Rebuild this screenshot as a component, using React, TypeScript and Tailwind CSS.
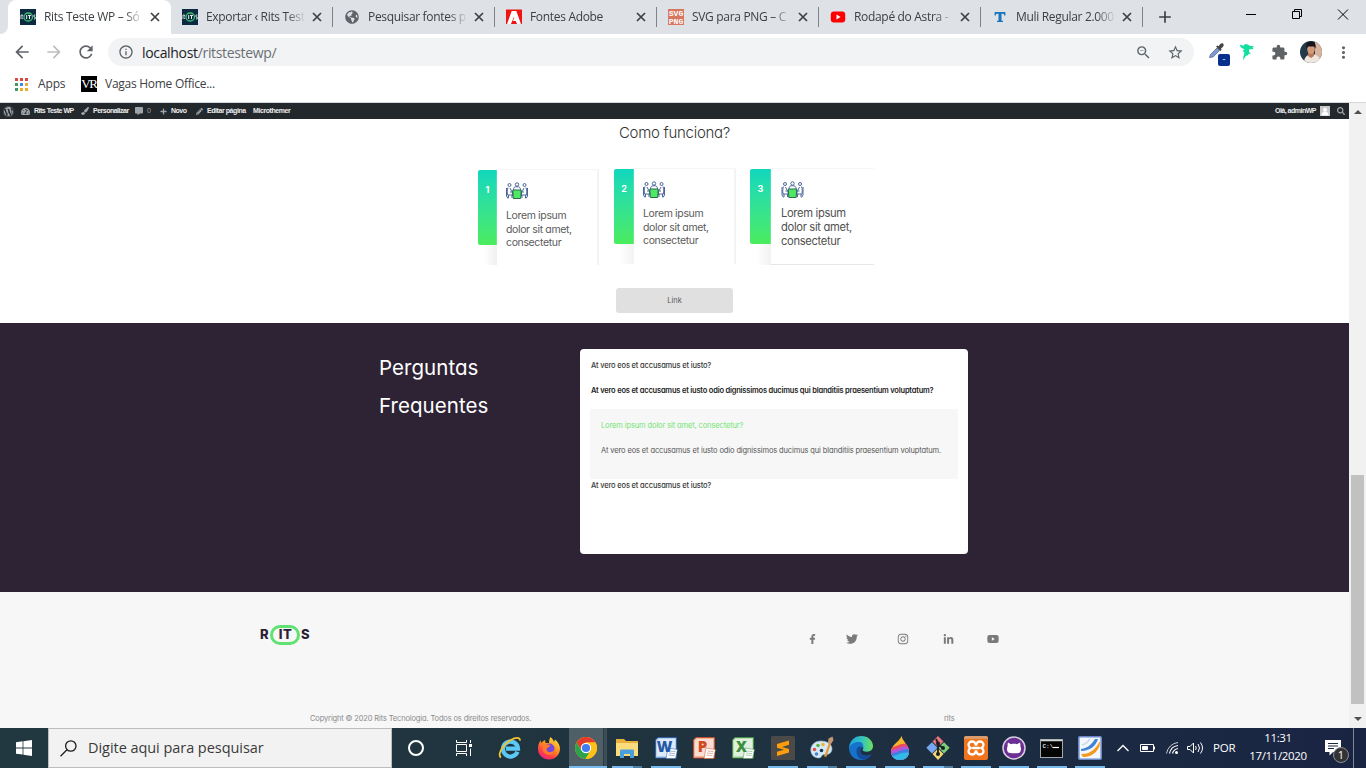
import type { ReactNode } from "react";
import {
  MdArrowBack,
  MdArrowForward,
  MdRefresh,
  MdInfoOutline,
  MdZoomOut,
  MdStarBorder,
  MdExtension,
  MdMoreVert,
  MdAdd,
} from "react-icons/md";
import {
  FaWordpress,
  FaTachometerAlt,
  FaPaintBrush,
  FaCommentAlt,
  FaPencilAlt,
  FaFacebookF,
  FaTwitter,
  FaInstagram,
  FaLinkedinIn,
  FaYoutube,
  FaSearch,
  FaPlus,
  FaGlobeAmericas,
} from "react-icons/fa";

/* ---------- Browser chrome ---------- */

function RitsFavicon() {
  return (
    <svg width="16" height="16" viewBox="0 0 16 16">
      <rect width="16" height="16" fill="#0d2b40" />
      <rect x="4" y="4" width="8.5" height="8" rx="4" fill="none" stroke="#3fbf6f" strokeWidth="1.3" />
      <path d="M1 6v4M2.6 6v1.6M1 6h1.6M2.6 8.6V10M14 6h1.4M14 6v2h1.2v2H14" stroke="#c9d6de" fill="none" />
      <path d="M6.7 6v4M8 6.4h3M9.5 6.4V10" stroke="#e8f4ee" fill="none" />
    </svg>
  );
}

function AdobeFavicon() {
  return (
    <svg width="16" height="16" viewBox="0 0 16 16">
      <rect y="0.5" width="16" height="14.5" fill="#f01414" />
      <path d="M5.7 2h4.6L15 15h-4l-1.3-3H6.9l1.4-3L8 8 4.9 15H1z" fill="#fff" />
    </svg>
  );
}

function SvgPngFavicon() {
  return (
    <svg width="16" height="16" viewBox="0 0 16 16">
      <rect width="16" height="16" fill="#d8765f" />
      <g fill="#fff" fontFamily="Liberation Mono, monospace" fontWeight="700" fontSize="8">
        <text x="0.8" y="7.2" textLength="14.4">SVG</text>
        <text x="0.8" y="14.7" textLength="14.4">PNG</text>
      </g>
    </svg>
  );
}

function YoutubeFavicon() {
  return (
    <svg width="16" height="16" viewBox="0 0 16 16">
      <rect x="0.8" y="2.4" width="14.4" height="11.2" rx="3" fill="#f00" />
      <path d="M6.5 5.6v4.8L10.6 8z" fill="#fff" />
    </svg>
  );
}

function TFavicon() {
  return (
    <svg width="16" height="16" viewBox="0 0 16 16">
      <path d="M2.6 3h10.8v3.6h-1.1l-.7-1.9H9.5v6.8l1.5.5v1H5v-1l1.5-.5V4.7H4.4l-.7 1.900H2.600z" fill="#1b75bb" />
    </svg>
  );
}

type TabProps = { icon: ReactNode; title: string; active?: boolean; divider?: boolean };

function Tab({ icon, title, active, divider }: TabProps) {
  return (
    <div
      className={
        active
          ? "relative -mr-px flex h-[34px] w-[163px] items-center rounded-t-lg bg-white pl-3"
          : "relative flex h-[34px] w-[162px] items-center pl-3"
      }
    >
      {divider && <span className="absolute left-0 top-[7px] h-5 w-px bg-[#808387]" />}
      <span className="flex size-4 shrink-0 items-center justify-center">{icon}</span>
      <span className="ml-2 w-[98px] shrink-0 whitespace-nowrap text-[12px] tracking-[-0.32px] text-[#3c4043] [mask-image:linear-gradient(to_right,#000_82%,transparent_102%)]">
        {title}
      </span>
      <svg className="ml-[8px] shrink-0" width="10" height="10" viewBox="0 0 10 10" stroke="#3c4043" strokeWidth="1.700">
        <path d="M1 1l8 8M9 1L1 9" />
      </svg>
    </div>
  );
}

const tabs: TabProps[] = [
  { icon: <RitsFavicon />, title: "Rits Teste WP – Só", active: true },
  { icon: <RitsFavicon />, title: "Exportar ‹ Rits Test" },
  { icon: <FaGlobeAmericas className="size-[14px] text-[#5f6368]" />, title: "Pesquisar fontes p", divider: true },
  { icon: <AdobeFavicon />, title: "Fontes Adobe", divider: true },
  { icon: <SvgPngFavicon />, title: "SVG para PNG – C", divider: true },
  { icon: <YoutubeFavicon />, title: "Rodapé do Astra -", divider: true },
  { icon: <TFavicon />, title: "Muli Regular 2.000", divider: true },
];

function TabStrip() {
  return (
    <div className="flex h-[34px] bg-[#dee1e6]">
      <span className="w-2 bg-white">
        <span className="block h-[34px] rounded-br-lg bg-[#dee1e6]" />
      </span>
      {tabs.map((tab) => (
        <Tab key={tab.title} {...tab} />
      ))}
      <span className="mt-[7px] h-5 w-px bg-[#808387]" />
      <MdAdd className="ml-3 mt-[7px] size-5 text-[#3c4043]" />
      <svg className="ml-auto mr-[14px] mt-2" width="106" height="13" viewBox="0 0 106 13" fill="none" stroke="#000">
        <path d="M0 6.500h10" />
        <path d="M46.500 3.500h7v7h-7zM48.500 3.500v-2h7v7h-2" />
        <path d="M92 1.500l10 10M102 1.500l-10 10" />
      </svg>
    </div>
  );
}

function Avatar() {
  return (
    <svg width="22" height="22" viewBox="0 0 22 22">
      <defs>
        <clipPath id="avatar">
          <circle cx="11" cy="11" r="11" />
        </clipPath>
      </defs>
      <g clipPath="url(#avatar)">
        <rect width="22" height="22" fill="#23394a" />
        <rect x="15" width="7" height="22" fill="#d9b49c" />
        <path d="M4 22c0-6 3-8 7-9 5 0 9 2 10 9z" fill="#efe6de" />
        <path d="M8 11h6v4l-3 2-3-2z" fill="#b97a5b" />
        <ellipse cx="11" cy="8" rx="3.800" ry="5" fill="#d39a7b" />
        <path d="M6.600 8C5.500 2 8 .5 11 .5S16.500 2 15.500 8L14.500 5.500H8z" fill="#15151b" />
      </g>
    </svg>
  );
}

function Toolbar() {
  return (
    <div className="flex h-[37px] items-center bg-white px-3 pb-px">
      <MdArrowBack className="size-5 text-[#5f6368]" />
      <MdArrowForward className="ml-3 size-5 text-[#bcbec1]" />
      <MdRefresh className="ml-3 size-5 text-[#5f6368]" />
      <div className="ml-3 flex h-7 w-[1086px] items-center rounded-full bg-[#f1f3f4] px-[10px]">
        <MdInfoOutline className="size-4 text-[#5f6368]" />
        <span className="ml-2 text-[14px] tracking-[-0.330px] text-[#202124]">
          localhost<span className="text-[#6b6f74]">/ritstestewp/</span>
        </span>
        <MdZoomOut className="ml-auto size-[17px] text-[#5f6368]" />
        <MdStarBorder className="ml-[15px] size-[17px] text-[#5f6368]" />
      </div>
      <span className="relative ml-[14px] mt-px flex h-[22px] w-[22px]">
        <svg width="17" height="17" viewBox="0 0 17 17">
          <path d="M1.500 15.500l1-3L9 6l2.500 2.500L5 15z" fill="#7c9bd6" stroke="#56698c" strokeWidth=".8" />
          <path d="M8 4.500l1.500-1 1.200.8C12 1.500 14 .6 15.200 1.700s.3 3.300-2.200 4.800l.6 1.200-1.200 1.400z" fill="#454545" />
        </svg>
        <span className="absolute left-[10px] top-[12px] flex h-3 w-3 items-center justify-center rounded-[2px] bg-[#06318f] pb-0.5 text-[9px] text-white">
          -
        </span>
      </span>
      <svg className="ml-[9px]" width="16" height="18" viewBox="0 0 16 18" fill="#13e0a0">
        <path d="M.5 1.500l4 1.200L6 1l3 .6 1.500 1.200 4.500.4-1.500 1.300 1 1.500-4.500.6 0 2.100 2 2.300-2-.3-1.500 1.800-1.500.3-2 3-1 1.700L4.500 13l1-3.500L3.500 8 5.500 6.500 2 4.500z" />
      </svg>
      <MdExtension className="ml-4 size-[17px] text-[#5f6368]" />
      <span className="ml-3">
        <Avatar />
      </span>
      <MdMoreVert className="ml-3 size-[19px] shrink-0 text-[#5f6368]" />
    </div>
  );
}

const appDots = [
  "bg-[#db4a41]", "bg-[#db4a41]", "bg-[#db4a41]",
  "bg-[#3a9d5d]", "bg-[#4285f4]", "bg-[#e5b030]",
  "bg-[#3a9d5d]", "bg-[#e5b030]", "bg-[#e5b030]",
];

function BookmarksBar() {
  return (
    <div className="flex h-8 items-center border-b border-[#d5d7da] bg-white pb-[5px] pl-[15px] text-[12px] text-[#3c4043]">
      <span className="grid grid-cols-3 gap-[2px]">
        {appDots.map((color, i) => (
          <span key={i} className={"size-[3px] " + color} />
        ))}
      </span>
      <span className="ml-[10px] w-[27px] whitespace-nowrap tracking-[-0.150px]">Apps</span>
      <span className="ml-4 flex size-4 items-center justify-center overflow-hidden bg-black font-['Liberation_Serif',serif] text-[13px] tracking-[-1.3px] text-white">
        VR
      </span>
      <span className="ml-2 tracking-[-0.270px]">Vagas Home Office...</span>
    </div>
  );
}

/* ---------- Site ---------- */

function AdminBar() {
  return (
    <div className="flex h-4 shrink-0 items-center whitespace-nowrap bg-[#23282d] pl-[3px] pr-1 font-['Liberation_Sans',sans-serif] text-[7px] font-bold tracking-[-0.5px] text-[#eeeeee]">
      <FaWordpress className="size-[11px] text-[#a0a5aa]" />
      <FaTachometerAlt className="ml-[7px] size-[9px] text-[#a0a5aa]" />
      <span className="ml-1 w-[47px]">Rits Teste WP</span>
      <FaPaintBrush className="size-[8px] text-[#a0a5aa]" />
      <span className="ml-1 w-[42px]">Personalizar</span>
      <FaCommentAlt className="size-[8px] text-[#a0a5aa]" />
      <span className="ml-1 w-[13px] font-normal text-[#a0a5aa]">0</span>
      <FaPlus className="size-[7px] text-[#a0a5aa]" />
      <span className="ml-1 w-[25px]">Novo</span>
      <FaPencilAlt className="size-[7px] text-[#a0a5aa]" />
      <span className="ml-1 w-[46px] tracking-[-0.430px]">Editar página</span>
      <span className="tracking-[-0.430px]">Microthemer</span>
      <span className="ml-auto">Olá, adminWP</span>
      <svg className="ml-1" width="10" height="10" viewBox="0 0 10 10">
        <rect width="10" height="10" fill="#c8c8c8" />
        <circle cx="5" cy="3.700" r="2" fill="#fff" />
        <path d="M1.500 9.500c0-3 1.500-4 3.500-4s3.500 1 3.500 4z" fill="#fff" />
      </svg>
      <FaSearch className="ml-[7px] size-[8px] text-[#a0a5aa]" />
    </div>
  );
}

function MeetingIcon({ className }: { className: string }) {
  return (
    <svg className={className} viewBox="0 0 22 17" fill="none" stroke="#4a6699" strokeWidth="1">
      <circle cx="3.500" cy="3" r="1.500" />
      <circle cx="11" cy="2.500" r="1.700" />
      <circle cx="18.500" cy="3" r="1.500" />
      <path d="M2 5.500c-1 2-.8 5-.5 7.500h4.500v3M2.500 13v3M.5 6v8l1.500 2.500M4 6l1.800 3.500h2M4 10h2.500v4" />
      <path d="M20 5.500c1 2 .8 5 .5 7.500H16v3M19.500 13v3M21.500 6v8L20 16.500M18 6l-1.800 3.500h-2M18 10h-2.500v4" />
      <path d="M7.500 8c0-2.500 1-3.300 3.500-3.300s3.500.8 3.500 3.300" />
      <path d="M6.800 8h8.400l-.5 8.500H7.300z" fill="#4fe862" stroke="#2c6a55" />
    </svg>
  );
}

const stepLines = ["Lorem ipsum", "dolor sit amet,", "consectetur"];

function StepText() {
  return (
    <>
      {stepLines.map((line) => (
        <span key={line} className="block whitespace-nowrap">
          {line}
        </span>
      ))}
    </>
  );
}

function Steps() {
  return (
    <div className="flex h-[97px] pl-[478px]">
      <div className="flex w-[136px] pt-px">
        <div className="flex h-[95px] w-[19px] flex-col bg-linear-to-r from-white from-30% to-[#efefef]">
          <span className="flex h-[75px] justify-center rounded-l-[2px] bg-linear-to-b from-[#10d7bd] to-[#4bec5c] pt-[13px] text-[9px] font-bold text-white">
            1
          </span>
        </div>
        <div className="h-[95px] w-[102px] border-r-2 border-[#f3f3f3] bg-white pl-[9px] pt-[12px] text-[10.500px] leading-[13.700px] tracking-[-0.360px] text-[#5b5b5b] shadow-[0_-1px_1px_#f6f6f6]">
          <MeetingIcon className="mb-[10px] h-[17px] w-[22px]" />
          <StepText />
        </div>
      </div>
      <div className="flex w-[136px]">
        <div className="flex h-[95px] w-5 flex-col bg-linear-to-r from-white from-30% to-[#f2f2f2]">
          <span className="flex h-[75px] justify-center rounded-l-[2px] bg-linear-to-b from-[#10d7bd] to-[#4bec5c] pt-[13px] text-[9px] font-bold text-white">
            2
          </span>
        </div>
        <div className="h-[95px] w-[102px] border-r-2 border-[#f3f3f3] bg-white pl-[9px] pt-[12px] text-[10.500px] leading-[13.700px] tracking-[-0.360px] text-[#5b5b5b] shadow-[0_-1px_1px_#f6f6f6]">
          <MeetingIcon className="mb-[9px] h-[17px] w-[22px]" />
          <StepText />
        </div>
      </div>
      <div className="flex w-[124px]">
        <div className="flex h-[96px] w-[21px] flex-col bg-linear-to-r from-white from-30% to-[#f2f2f2]">
          <span className="flex h-[75px] justify-center rounded-l-[2px] bg-linear-to-b from-[#10d7bd] to-[#4bec5c] pt-[13px] text-[9px] font-bold text-white">
            3
          </span>
        </div>
        <div className="h-[96px] w-[103px] border-b border-[#e6e6e6] bg-white pl-[10px] pt-[12px] text-[11.200px] leading-[13.800px] tracking-[-0.330px] text-[#505050] shadow-[0_-1px_1px_#f6f6f6]">
          <MeetingIcon className="mb-[9px] h-[17px] w-[23px]" />
          <StepText />
        </div>
      </div>
    </div>
  );
}

function HowItWorks() {
  return (
    <section className="flex h-[204px] shrink-0 flex-col bg-white">
      <h2 className="flex h-[28px] items-center justify-center text-[15px] font-light tracking-[-0.280px] text-[#333]">
        Como funciona?
      </h2>
      <div className="mt-[22px]">
        <Steps />
      </div>
      <button className="mx-auto mt-[22px] h-[25px] w-[117px] rounded-[3px] bg-[#e0e0e0] text-[7.500px] text-[#5a5a5a]">
        Link
      </button>
    </section>
  );
}

function Faq() {
  return (
    <section className="flex h-[269px] shrink-0 bg-[#2e2335] pl-[379px] pt-[26px]">
      <h2 className="w-[201px] text-[20.500px] leading-[38px] tracking-[0.050px] text-white">
        Perguntas
        <br />
        Frequentes
      </h2>
      <div className="flex h-[205px] w-[388px] flex-col rounded-[4px] bg-white px-[10px] pt-1 text-[7.500px] leading-[25px] text-[#3a3a3a]">
        <p className="whitespace-nowrap pl-px font-medium tracking-[-0.160px]">At vero eos et accusamus et iusto?</p>
        <p className="whitespace-nowrap pl-px font-semibold tracking-[-0.200px] text-[#222]">
          At vero eos et accusamus et iusto odio dignissimos ducimus qui blanditiis praesentium voluptatum?
        </p>
        <div className="mt-[6px] h-[70px] bg-[#f7f7f7] pl-[11px] pt-1 tracking-[-0.120px] text-[#555]">
          <p className="text-[#6fe572]">Lorem ipsum dolor sit amet, consectetur?</p>
          <p className="whitespace-nowrap">
            At vero eos et accusamus et iusto odio dignissimos ducimus qui blanditiis praesentium voluptatum.
          </p>
        </div>
        <p className="-mt-[6px] whitespace-nowrap pl-px font-medium tracking-[-0.160px]">
          At vero eos et accusamus et iusto?
        </p>
      </div>
    </section>
  );
}

function Footer() {
  return (
    <footer className="flex grow flex-col bg-[#f7f7f7]">
      <div className="flex h-[94px] items-center pl-[260px] text-[#7a7a7a]">
        <div className="-mt-[8px] flex w-[549px] items-center text-[13px] font-extrabold text-[#2b2133]">
          <span className="w-[10px]">R</span>
          <span className="flex h-5 w-[30px] items-center justify-center rounded-full border-[3px] border-[#5fe271] pl-px tracking-[0.500px]">
            IT
          </span>
          <span className="ml-px">S</span>
        </div>
        <FaFacebookF className="h-[10px] w-[7px]" />
        <FaTwitter className="ml-[30px] size-3" />
        <FaInstagram className="ml-[39px] size-[12px]" />
        <FaLinkedinIn className="ml-[34px] size-[11px]" />
        <FaYoutube className="ml-[33px] size-3" />
      </div>
      <div className="mt-[25px] flex h-4 items-center whitespace-nowrap pl-[310px] text-[7.500px] tracking-[-0.140px] text-[#8a8a8a]">
        <span className="w-[634px]">Copyright © 2020 Rits Tecnologia. Todos os direitos reservados.</span>
        <span>rits</span>
      </div>
    </footer>
  );
}

function Scrollbar() {
  return (
    <div className="flex w-[17px] shrink-0 flex-col items-center justify-between bg-[#f1f1f1] pb-[7px] pt-[7px]">
      <span className="border-x-4 border-b-4 border-x-transparent border-b-[#505050]" />
      <span className="mb-[13px] mt-auto h-[229px] w-[13px] bg-[#c1c1c1]" />
      <span className="border-x-4 border-t-4 border-x-transparent border-t-[#505050]" />
    </div>
  );
}

/* ---------- Taskbar ---------- */

function IeIcon() {
  return (
    <svg width="24" height="24" viewBox="0 0 24 24" fill="none">
      <path d="M19.500 15.800A7.500 7.500 0 1 1 20 12.700H8" stroke="#5bc8f5" strokeWidth="4.200" />
      <path d="M3 21.500C-1 19 5 8 12.500 4.200 17.500 1.200 22.500 1 21.800 4.600" stroke="#f2c230" strokeWidth="1.900" />
    </svg>
  );
}

function FirefoxIcon() {
  return (
    <svg width="24" height="24" viewBox="0 0 24 24">
      <defs>
        <linearGradient id="ff" x1="0.800" y1="0" x2="0.200" y2="1">
          <stop offset="0" stopColor="#ffe23c" />
          <stop offset="0.450" stopColor="#ff8a1f" />
          <stop offset="0.750" stopColor="#ff3b4b" />
          <stop offset="1" stopColor="#e81f8a" />
        </linearGradient>
      </defs>
      <path d="M13.500 1c2 1.500 3 3.500 3.500 5l1-2.500c3.500 3 5.200 6.500 5 9.500-.4 6-5 10.500-11 10.500S1 19 1 13c0-3 .7-6 2.500-8.500L4.500 7C6 5 7 4.500 8 4l.5 3H12c0-2 .5-4.500 1.500-6z" fill="url(#ff)" />
      <circle cx="12.500" cy="12.500" r="5" fill="#7448dc" />
      <path d="M7 9c2-1.200 4-.5 6.500.5-1 2-3.500 1.500-4 3.500 0 3 4 4.500 7.500 1.500-1 5-6 5.500-9 3S5 11 7 9z" fill="#ff7a2a" />
    </svg>
  );
}

function ChromeIcon() {
  return (
    <svg width="22" height="22" viewBox="0 0 22 22">
      <circle cx="11" cy="11" r="11" fill="#fbc116" />
      <path d="M11 11L6.700 13.500 1.500 5.500A11 11 0 0 1 20.500 5.500H11z" fill="#e33b2e" />
      <path d="M1.500 5.500A11 11 0 0 0 10.500 22l5-8.500L11 11 6.500 13.500z" fill="#2ba24c" />
      <path d="M20.500 5.500H11v5.500l4.500 2.500-5 8.500A11 11 0 0 0 20.500 5.500z" fill="#fbc116" />
      <circle cx="11" cy="11" r="5.200" fill="#fff" />
      <circle cx="11" cy="11" r="4.100" fill="#3f7df0" />
    </svg>
  );
}

function FolderIcon() {
  return (
    <svg width="22" height="20" viewBox="0 0 22 20">
      <path d="M0 1h8l2 2h12v15H0z" fill="#e9b03a" />
      <path d="M0 5h22v13H0z" fill="#fbdc7d" />
      <path d="M4 20v-7c0-1 .5-1.500 1.500-1.500h11c1 0 1.500.5 1.500 1.500v7h-4v-4H8v4z" fill="#49a0dd" />
    </svg>
  );
}

type OfficeProps = { letter: string; color: string; light: string };

function OfficeIcon({ letter, color, light }: OfficeProps) {
  return (
    <svg width="23" height="22" viewBox="0 0 23 22">
      <path d="M3 .5h18.500V21H.5V3z" fill={light} stroke={color} strokeWidth=".8" />
      <path d="M2 4l2-2h16v17H2z" fill="#fff" opacity=".55" />
      <path d="M13 11l9.500 1.500-2 9H11z" fill="#fff" stroke={color} strokeWidth=".5" />
      <path d="M14.500 14l6 .6M14 16l6 .6M13.500 18l6 .6" stroke={color} strokeWidth=".7" opacity=".6" />
      <text x="9.500" y="15" textAnchor="middle" fontFamily="Open Sans, sans-serif" fontWeight="800" fontSize="15" fill={color}>
        {letter}
      </text>
    </svg>
  );
}

function SublimeIcon() {
  return (
    <svg width="24" height="24" viewBox="0 0 24 24">
      <rect width="24" height="24" rx="1.500" fill="#4b4a49" />
      <path d="M6 8l12-3.500v4.200L11 11l7 2v3.500L6 20v-4.200l7-2.100-7-2z" fill="#ff9d0a" />
    </svg>
  );
}

function PaintIcon() {
  return (
    <svg width="24" height="24" viewBox="0 0 24 24">
      <path d="M11 5C4 5 .5 10 .8 14.500 1 19.500 5 22 9 22c3 0 2-3.500 5-3.500 3.500.5 7.500-.5 8-5.500C22 8 17 5 11 5z" fill="#d5e9f5" stroke="#86b8d6" strokeWidth=".6" />
      <circle cx="4.500" cy="13.500" r="1.800" fill="#e2504a" />
      <circle cx="8" cy="9.500" r="1.800" fill="#56b34b" />
      <circle cx="13" cy="8.500" r="1.800" fill="#f2b233" />
      <circle cx="6.500" cy="18" r="1.800" fill="#3f86d0" />
      <circle cx="11.500" cy="14.500" r="1.800" fill="#14364d" />
      <path d="M14 20.500L19 7l2 .7-4.500 13z" fill="#e79a3a" />
      <path d="M18 7l.5-4.500L22.500.5l1 3.500-2.500 4z" fill="#c79877" />
    </svg>
  );
}

function EdgeIcon() {
  return (
    <svg width="24" height="24" viewBox="0 0 24 24">
      <defs>
        <linearGradient id="edge-top" x1="0" y1="0.500" x2="1" y2="0.500">
          <stop offset="0" stopColor="#1fa3e2" />
          <stop offset="0.550" stopColor="#35c3c0" />
          <stop offset="1" stopColor="#6de357" />
        </linearGradient>
      </defs>
      <path d="M0 12C.5 4.500 6 0 12 0c7.500 0 12 5 12 10 0 4-3 5.700-6 5.700-3.500 0-5-1.200-4.200-2.200 1-1.200 1-5-3.300-5C6 8.500 3 12 3 16z" fill="url(#edge-top)" />
      <path d="M0 12c1.500-4 6-6.500 10.500-6C14 6.500 15 10 13.500 12c-2 .5-3.500 3.500-1 6 3 2.500 7 2 10 .2-2 3.800-6 5.800-10.500 5.800C5 24 0 18.500 0 12z" fill="#1673c9" />
      <path d="M8.500 11.500C6 16 8 22.500 14 23.800c3.500-.3 6.700-2.500 8.500-5.600-3 1.800-7 2.300-10-.2-2.500-2.500-1.200-5.500 1-6-1-2-3.500-2-5-.5z" fill="#154a9a" />
    </svg>
  );
}

function Paint3dIcon() {
  return (
    <svg width="20" height="24" viewBox="0 0 20 24">
      <defs>
        <clipPath id="drop">
          <path d="M11.500 0C12.500 5 19 9.500 19 15.500 19 20.500 15 24 10 24S1 20.500 1 15.500C1 9 9.500 6 11.500 0z" />
        </clipPath>
      </defs>
      <g clipPath="url(#drop)">
        <rect width="20" height="24" fill="#f5b62c" />
        <path d="M0 11c6 1 10-5 20-3v16H0z" fill="#ec4c5b" />
        <path d="M0 14c6 1 12-6 20-3v13H0z" fill="#b656d8" />
        <path d="M0 17c6 2 12-6 20-3v10H0z" fill="#3f7fe0" />
        <path d="M0 20c6 1 12-5 20-3v7H0z" fill="#31b9e8" />
      </g>
    </svg>
  );
}

function GitIcon() {
  return (
    <svg width="24" height="24" viewBox="0 0 24 24">
      <path d="M12 0l5.500 5.500L12 11 6.500 5.500z" fill="#e8747c" />
      <path d="M6 6.200l5.500 5.500L6 17.500.3 11.800z" fill="#77a7ee" />
      <path d="M18 6.200l5.700 5.600-5.700 5.700-5.500-5.800z" fill="#7cd07a" />
      <path d="M12 12.500l5.500 5.500L12 24l-5.500-6z" fill="#f4d774" />
      <path d="M10 3l2 4v12M12 8.500l5 3.500" stroke="#1b1f24" strokeWidth="1.800" fill="none" />
      <circle cx="12" cy="7.500" r="2" fill="#1b1f24" />
      <circle cx="17" cy="12" r="2" fill="#1b1f24" />
      <circle cx="12" cy="18" r="2" fill="#1b1f24" />
    </svg>
  );
}

function XamppIcon() {
  return (
    <svg width="24" height="24" viewBox="0 0 24 24">
      <rect width="24" height="24" rx="2" fill="#f0741c" />
      <path d="M0 2c0-1 1-2 2-2h20c1 0 2 1 2 2v1H0z" fill="#d99a6c" />
      <path d="M12 9.500c-.5-3-2-4-4-4S4.500 7 4.500 8.800c0 1.500 1 2.700 2 3.200-1 .5-2 1.700-2 3.200C4.500 17 6 18.500 8 18.500s3.500-1 4-4c.5 3 2 4 4 4s3.500-1.500 3.500-3.300c0-1.500-1-2.700-2-3.200 1-.5 2-1.700 2-3.200 0-1.800-1.500-3.300-3.500-3.300s-3.500 1-4 4zM8.500 12h7" fill="none" stroke="#fff" strokeWidth="2.300" />
    </svg>
  );
}

function GithubIcon() {
  return (
    <svg width="24" height="24" viewBox="0 0 24 24">
      <circle cx="12" cy="12" r="11" fill="#6b2f93" stroke="#d9cfe2" strokeWidth="1.500" />
      <path d="M6 6.500l3 1.700c2-.5 4-.5 6 0l3-1.700c.5 1.500.6 2.500.3 3.500 1.200 2.500.7 5-.3 6.200-1.500 1.500-10.500 1.500-12 0-1-1.200-1.500-3.700-.3-6.200-.3-1-.2-2 .3-3.500z" fill="#fff" />
    </svg>
  );
}

function TerminalIcon() {
  return (
    <svg width="23" height="19" viewBox="0 0 23 19">
      <rect x=".5" y=".5" width="22" height="18" fill="#050505" stroke="#a4a8ab" />
      <path d="M1 1.500h21" stroke="#d4d6d8" strokeWidth="1.500" />
      <text x="2.500" y="9" fontFamily="Liberation Mono, monospace" fontWeight="700" fontSize="6" fill="#ddd">C:\</text>
      <path d="M13 8.500h6" stroke="#fff" strokeWidth="1.200" />
    </svg>
  );
}

function SwooshIcon() {
  return (
    <svg width="24" height="24" viewBox="0 0 24 24">
      <rect x=".8" y=".8" width="22.400" height="22.400" rx="1" fill="#f4f7fc" stroke="#6a87c8" strokeWidth="1.600" />
      <path d="M3 13C10 12 14 8 17 3h3C18 10 12 15 3 15z" fill="#3f84d6" />
      <path d="M3 18c8 .5 14-4 19-13 .5 8-6 16-17 16z" fill="#f29a1f" />
      <path d="M4 9c4-1 6-3 8-6" stroke="#cdd9ec" strokeWidth="1.500" fill="none" />
    </svg>
  );
}

type TaskItem = { name: string; icon: ReactNode; slot: string; state?: "open" | "grouped" | "active" };

const tasks: TaskItem[] = [
  { name: "ie", icon: <IeIcon />, slot: "w-[38px]" },
  { name: "firefox", icon: <FirefoxIcon />, slot: "ml-px w-[38px]" },
  { name: "chrome", icon: <ChromeIcon />, slot: "-ml-px w-[38px]", state: "active" },
  { name: "explorer", icon: <FolderIcon />, slot: "ml-[3px] w-[38px]", state: "grouped" },
  { name: "word", icon: <OfficeIcon letter="W" color="#2459a6" light="#b6d0f0" />, slot: "ml-px w-[38px]", state: "open" },
  { name: "powerpoint", icon: <OfficeIcon letter="P" color="#cf4a23" light="#f3b49c" />, slot: "w-[38px]" },
  { name: "excel", icon: <OfficeIcon letter="X" color="#3c8f3e" light="#b8e0b2" />, slot: "ml-px w-[38px]" },
  { name: "sublime", icon: <SublimeIcon />, slot: "ml-[2px] w-[38px]", state: "open" },
  { name: "paint", icon: <PaintIcon />, slot: "ml-px w-[38px]", state: "grouped" },
  { name: "edge", icon: <EdgeIcon />, slot: "ml-px w-[38px]", state: "open" },
  { name: "paint3d", icon: <Paint3dIcon />, slot: "ml-px w-[38px]", state: "open" },
  { name: "git", icon: <GitIcon />, slot: "w-[38px]", state: "grouped" },
  { name: "xampp", icon: <XamppIcon />, slot: "w-[38px]", state: "open" },
  { name: "github", icon: <GithubIcon />, slot: "w-[38px]", state: "open" },
  { name: "terminal", icon: <TerminalIcon />, slot: "w-[37px]", state: "open" },
  { name: "swoosh", icon: <SwooshIcon />, slot: "ml-px w-[38px]", state: "open" },
];

function TaskButton({ icon, slot, state }: TaskItem) {
  return (
    <div className={"relative flex h-10 shrink-0 items-center justify-center " + slot}>
      {state === "active" && (
        <span className="absolute inset-y-0 left-[2px] flex w-[38px] border-b-2 border-[#76b9ed] bg-[#4f5f67]">
          <span className="ml-auto w-[4px] border-l border-[#2c3c44] bg-[#3d4e57]" />
        </span>
      )}
      {(state === "open" || state === "grouped") && (
        <span className="absolute bottom-0 left-1 h-0.5 w-[30px] bg-[#76b9ed]" />
      )}
      {state === "grouped" && <span className="absolute bottom-0 right-[4px] h-0.5 w-[9px] bg-[#4f7ea3]" />}
      <span className="relative">{icon}</span>
    </div>
  );
}

function Tray() {
  return (
    <div className="ml-auto flex h-10 w-[249px] shrink-0 items-center text-white">
      <svg width="90" height="20" viewBox="0 0 90 20" fill="none" stroke="#fff">
        <path d="M.5 13L6 7.500l5.500 5.500" strokeWidth="1.300" />
        <path d="M23.500 6.500h13v7h-13zM37.500 8.500v3" />
        <path d="M25.500 8.500h5v3h-5z" fill="#fff" />
        <path d="M49.500 15.500A13 13 0 0 1 61 4.500" opacity=".75" />
        <path d="M52.500 15.500A10 10 0 0 1 61 7.500M55.500 15.500A7 7 0 0 1 61 10.500" strokeWidth="1.200" />
        <circle cx="59.500" cy="14.500" r="1.500" fill="#fff" stroke="none" />
        <path d="M70.500 8.500H73l3.500-3.500v10L73 11.500h-2.500z" />
        <path d="M78.500 8q1.500 2 0 4M81 6q3 4 0 8M83.500 4.500q4 5.500 0 11" />
      </svg>
      <span className="ml-[6px] w-[26px] text-[11.500px] tracking-[-0.150px]">POR</span>
      <div className="-mt-[2px] ml-[2px] flex w-[74px] flex-col items-center text-[11.500px] leading-[18px] tracking-[-0.350px]">
        <span>11:31</span>
        <span>17/11/2020</span>
      </div>
      <span className="relative ml-[10px] flex h-10 w-[26px]">
        <svg className="mt-[12px]" width="16" height="16" viewBox="0 0 16 16">
          <path d="M0 0h16v12H8l-3.500 3.500V12H0z" fill="#fff" />
          <path d="M3 3.500h10M3 6h10M3 8.500h6" stroke="#1b2940" />
        </svg>
        <span className="absolute left-[8px] top-[19px] flex size-4 items-center justify-center rounded-full border border-[#8c8f94] bg-[#333] text-[11px]">
          1
        </span>
      </span>
      <span className="ml-[2px] h-10 w-px bg-[#7c8596]" />
    </div>
  );
}

function Taskbar() {
  return (
    <div className="flex h-10 shrink-0 items-center bg-linear-to-r from-[#213841] via-[#1f333f] via-50% to-[#192443]">
      <svg className="ml-4 mr-4" width="16" height="16" viewBox="0 0 16 16" fill="#fff">
        <path d="M0 2.300L6.600 1.300v6.200H0zM7.400 1.200L16 0v7.500H7.400zM0 8.400h6.600v6.200L0 13.700zM7.400 8.400H16V16l-8.600-1.200z" />
      </svg>
      <div className="flex h-10 w-[344px] items-center border border-[#bdbdbd] bg-[#f2f2f2] pl-[11px]">
        <svg width="17" height="17" viewBox="0 0 17 17" fill="none" stroke="#1c1c1c" strokeWidth="1.300">
          <circle cx="10.800" cy="6" r="5.200" />
          <path d="M7 9.800L.5 16.300" />
        </svg>
        <span className="ml-[11px] text-[14.500px] tracking-[-0.050px] text-[#3a3a3a]">Digite aqui para pesquisar</span>
      </div>
      <span className="ml-4 size-4 rounded-full border-2 border-white" />
      <svg className="ml-8" width="17" height="16" viewBox="0 0 17 16" fill="none" stroke="#fff">
        <path d="M.5 0v2.500h10V0M.5 4.500h10v7H.5zM.5 16v-2.500h10V16M14.500 0v3M14.500 8.500V16" />
        <path d="M13 4h3v3h-3z" fill="#fff" stroke="none" />
      </svg>
      <div className="ml-[18px] flex">
        {tasks.map((task) => (
          <TaskButton key={task.name} {...task} />
        ))}
      </div>
      <Tray />
    </div>
  );
}

export default function App() {
  return (
    <div className="flex h-[768px] w-[1366px] flex-col overflow-hidden bg-white font-['Open_Sans',sans-serif]">
      <TabStrip />
      <Toolbar />
      <BookmarksBar />
      <div className="flex h-[625px]">
        <main className="flex w-[1349px] flex-col font-['Inter',sans-serif] [font-feature-settings:'cv11']">
          <AdminBar />
          <HowItWorks />
          <Faq />
          <Footer />
        </main>
        <Scrollbar />
      </div>
      <Taskbar />
    </div>
  );
}
